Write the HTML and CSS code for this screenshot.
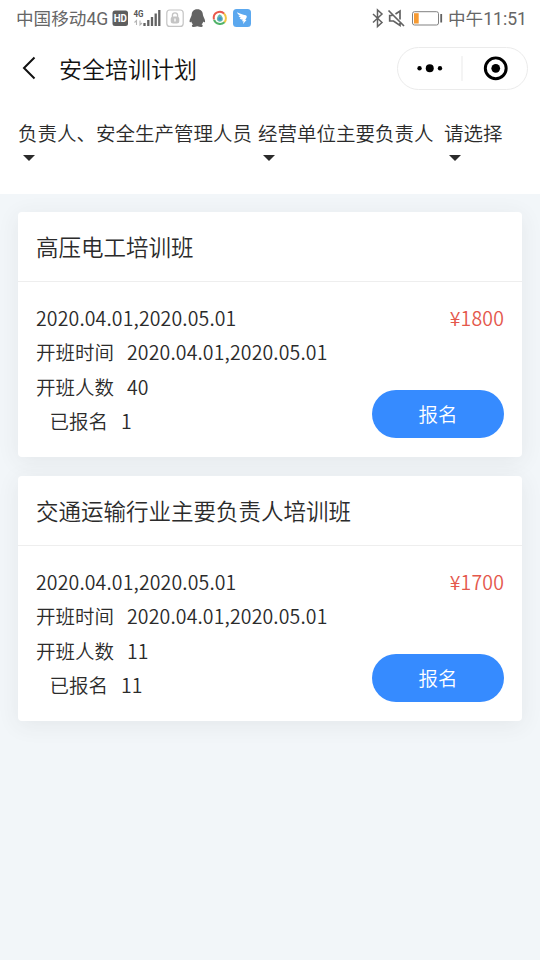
FILE: index.html
```html
<!DOCTYPE html>
<html lang="zh-CN">
<head>
<meta charset="utf-8">
<title>安全培训计划</title>
<link rel="stylesheet" href="styles.css">
</head>
<body>
<div class="status">
  <span class="carrier">中国移动4G</span>
  <svg class="status-icons" width="142" height="24" viewBox="112 6 142 24">
    <rect x="112.500" y="10.500" width="15.500" height="15.500" rx="2.500" fill="#5e5e5e"/>
    <text x="113.700" y="22.200" class="hd" textLength="13.200" lengthAdjust="spacingAndGlyphs">HD</text>
    <text x="133.500" y="17.300" class="net" textLength="10" lengthAdjust="spacingAndGlyphs">4G</text>
    <path d="M136.500 25v-4.500l-2 2M140 20.500V25l2-2" fill="none" stroke="#b5b5b5" stroke-width="1.100"/>
    <path d="M144.500 23v3M148.300 20v6M152 17v9M155.700 13.500v12.500M159.300 10v16" stroke="#626262" stroke-width="2.300"/>
    <rect x="166.800" y="10" width="16.400" height="16.400" rx="3" fill="#fff" stroke="#c4c4c4" stroke-width="1.200"/>
    <path d="M172.400 17v-1.600a2.600 2.600 0 0 1 5.200 0V17" fill="none" stroke="#c4c4c4" stroke-width="1.300"/>
    <rect x="170.700" y="16.500" width="8.600" height="7" rx="2.500" fill="#c4c4c4"/>
    <path d="M175 18.500v3" stroke="#fff" stroke-width="1.400"/>
    <path d="M197.300 9.300c-3.900 0-5.600 2.500-5.600 5.500 0 1.500-2.200 4-2.200 6.500 0 1.400.9 1.400 1.800.1.300 1.300.9 2.200 1.700 2.800-1.700.8-1.500 2.700.4 2.700 1.500 0 2.500-.2 3.900-.6 1.400.4 2.400.6 3.900.6 1.900 0 2.100-1.900.4-2.700.8-.6 1.400-1.500 1.700-2.800.9 1.300 1.800 1.300 1.800-.1 0-2.500-2.200-5-2.200-6.500 0-3-1.700-5.500-5.600-5.500z" fill="#636363"/>
    <g fill="none" stroke-width="2">
      <path d="M213.900 19.500c-.6-3 .6-6 3.300-7.200 3-1.300 5.500-.3 7 1.400" stroke="#e9594b"/>
      <path d="M224 13.500c2.400 2.400 2.600 6.500.3 9" stroke="#f3c644"/>
      <path d="M224.500 22.300c-3.500 3-8.600 1.800-10.500-2.500" stroke="#51b368"/>
    </g>
    <path d="M219.700 14.200c2 1.200 3.200 3 3.200 4.800 0 3.500-6 3.500-6 0 0-1.800 1-3.700 2.800-4.800z" fill="#62b9ad"/>
    <circle cx="220" cy="18.700" r="1.800" fill="#418fd0"/>
    <rect x="233" y="9" width="18" height="18" rx="3.500" fill="#5ba8ef"/>
    <path d="M237 12.200c3 1.600 5.500 2.100 8.800 3.100 1.200.4 1.200 1.400.6 2.600l-1.200 2.100h1.300l-3.500 4 .6-2.800h-1.500l.6-1.600c-1.500 0-2.500-.5-3-1.500l1.600-.2c-1.500-.6-2.400-1.300-2.700-2.200h1.800c-1.800-.8-3-2-3.400-3.500z" fill="#fff"/>
  </svg>
  <svg class="device-icons" width="74" height="24" viewBox="370 6 74 24">
    <path d="M373 14l9 8.500-4.500 4V10l4.500 4-9 8.500" fill="none" stroke="#626262" stroke-width="1.500"/>
    <path d="M392.500 15.500h-2.800V21h3.800l6.500 4.500V23M395.500 14l4.500-3v8.500M388.500 10.500l15.500 15.500" fill="none" stroke="#626262" stroke-width="1.700"/>
    <rect x="412.500" y="11.700" width="26" height="13.300" rx="2" fill="#fff" stroke="#818181" stroke-width="1"/>
    <rect x="414" y="13.200" width="4.700" height="10.300" fill="#f69a32"/>
    <path d="M441.200 14v8.500" stroke="#626262" stroke-width="1.800"/>
  </svg>
  <span class="clock">中午11:51</span>
</div>
<header class="nav">
  <svg class="back" width="14" height="24" viewBox="0 0 14 24"><path d="M12.500 1.500L2 12l10.500 10.500" fill="none" stroke="#111" stroke-width="2"/></svg>
  <h1>安全培训计划</h1>
  <div class="capsule">
    <svg width="130" height="42" viewBox="0 0 130 42">
      <circle cx="21.700" cy="20.300" r="2.200"/><circle cx="32" cy="20.300" r="4"/><circle cx="42.300" cy="20.300" r="2.200"/>
      <path d="M64.500 8v25" stroke="#e9e9e9"/>
      <circle cx="98.500" cy="20.300" r="10.500" fill="none" stroke="#000" stroke-width="3"/><circle cx="98.500" cy="20.300" r="4.400"/>
    </svg>
  </div>
</header>
<div class="filters">
  <div class="filter first"><span>负责人、安全生产管理人员</span><i class="caret"></i></div>
  <div class="filter second"><span>经营单位主要负责人</span><i class="caret"></i></div>
  <div class="filter"><span>请选择</span><i class="caret"></i></div>
</div>
<main class="list">
  <section class="card">
    <h2>高压电工培训班</h2>
    <div class="body">
      <div class="row"><span class="num">2020.04.01,2020.05.01</span><span class="num price">¥1800</span></div>
      <div class="row"><span class="label">开班时间</span><span class="num">2020.04.01,2020.05.01</span></div>
      <div class="row"><span class="label">开班人数</span><span class="num">40</span></div>
      <div class="row indent"><span class="label">已报名</span><span class="num">1</span></div>
      <button class="join">报名</button>
    </div>
  </section>
  <section class="card">
    <h2>交通运输行业主要负责人培训班</h2>
    <div class="body">
      <div class="row"><span class="num">2020.04.01,2020.05.01</span><span class="num price">¥1700</span></div>
      <div class="row"><span class="label">开班时间</span><span class="num">2020.04.01,2020.05.01</span></div>
      <div class="row"><span class="label">开班人数</span><span class="num">11</span></div>
      <div class="row indent"><span class="label">已报名</span><span class="num">11</span></div>
      <button class="join">报名</button>
    </div>
  </section>
</main>
</body>
</html>
```
FILE: styles.css
```css
* { box-sizing: border-box; }
body {
  margin: 0;
  min-height: 960px;
  background: #f2f6f9;
  color: #2b2b2b;
  font-family: "Noto Sans CJK SC", sans-serif;
  font-size: 19.5px;
  font-weight: 350;
}
.status {
  display: flex;
  align-items: center;
  height: 36px;
  padding: 0 12px 0 16px;
  background: #fff;
  color: #666;
  font: 400 17.600px/36px Roboto, "Noto Sans CJK SC", sans-serif;
  white-space: nowrap;
}
.carrier { width: 96px; padding-top: 1px; }
.status svg { flex: none; }
.device-icons { margin-left: auto; }
.clock { width: 80px; margin-left: 4px; padding-top: 1px; }
.hd { font: bold 10px Roboto, sans-serif; fill: #fff; }
.net { font: bold 9.500px Roboto, sans-serif; fill: #555; }
.nav {
  display: flex;
  align-items: center;
  height: 64px;
  padding: 0 12px 0 22px;
  background: #fff;
}
.nav h1 {
  margin: 0 0 1px 23px;
  color: #111;
  font-size: 23px;
  font-weight: 350;
  line-height: 34px;
}
.capsule {
  display: flex;
  width: 131px;
  height: 43px;
  margin-left: auto;
  border: 1px solid #ebebeb;
  border-radius: 22px;
}
.filters {
  display: flex;
  height: 94px;
  padding: 18px 18px 0;
  background: #fff;
  line-height: 30px;
  white-space: nowrap;
}
.filter { display: flex; flex-direction: column; }
.filter.first { width: 240px; }
.filter.second { width: 186px; }
.caret {
  width: 0;
  margin: 7px 0 0 5px;
  border: 6px solid transparent;
  border-top: 6px solid #2b2b2b;
  border-bottom: 0;
}
.list {
  display: flex;
  flex-direction: column;
  gap: 18.500px;
  padding: 17.500px 18px;
}
.card {
  height: 245.500px;
  background: #fff;
  border-radius: 4px;
  box-shadow: 0 4px 22px rgba(60, 60, 60, .08);
}
.card h2 {
  height: 70.500px;
  margin: 0;
  padding-left: 18px;
  border-bottom: 1px solid #eee;
  font-size: 22.500px;
  font-weight: 350;
  line-height: 68px;
}
.body { position: relative; height: 175px; padding: 18.500px 18px; }
.row { display: flex; height: 34.500px; line-height: 34.500px; }
.num { letter-spacing: .14px; }
.label { margin-right: 13px; }
.indent { padding-left: 13.500px; }
.price { margin-left: auto; color: #e4584c; }
.join {
  position: absolute;
  right: 18px;
  bottom: 19px;
  width: 132px;
  height: 48px;
  padding: 0;
  border: 0;
  border-radius: 24px;
  background: #368bff;
  color: #fff;
  font: inherit;
  line-height: 48px;
}
```
